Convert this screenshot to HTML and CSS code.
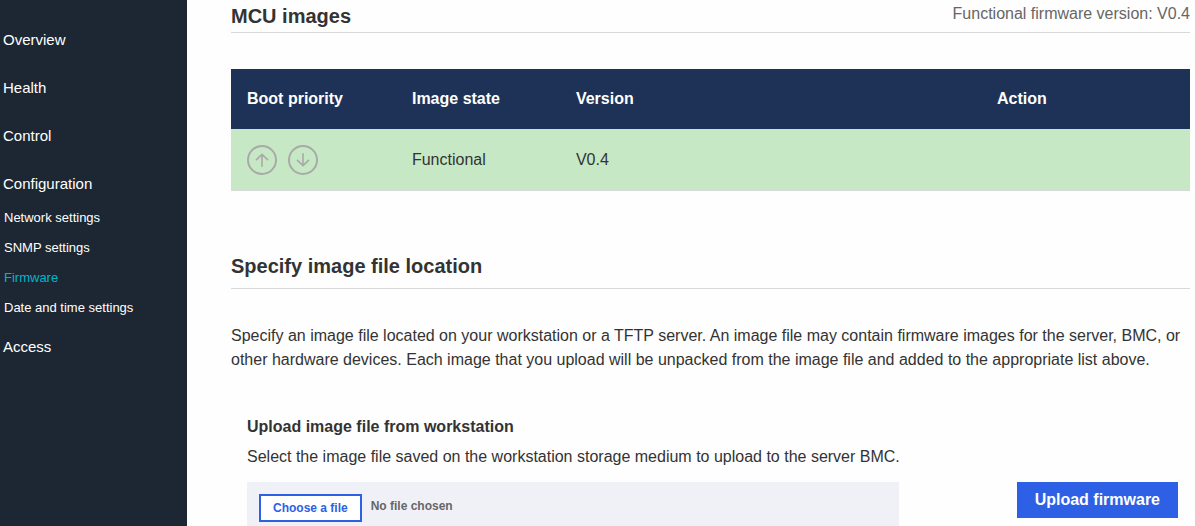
FILE: index.html
```html
<!DOCTYPE html>
<html lang="en">
<head>
<meta charset="utf-8">
<title>Firmware</title>
<link rel="stylesheet" href="styles.css">
</head>
<body>
<div class="app">
  <nav class="sidebar" aria-label="Main">
    <a class="nav-link" href="#overview">Overview</a>
    <a class="nav-link" href="#health">Health</a>
    <a class="nav-link" href="#control">Control</a>
    <a class="nav-link" href="#configuration">Configuration</a>
    <div class="subnav">
      <a class="subnav-link" href="#network">Network settings</a>
      <a class="subnav-link" href="#snmp">SNMP settings</a>
      <a class="subnav-link active" href="#firmware" aria-current="page">Firmware</a>
      <a class="subnav-link" href="#date">Date and time settings</a>
    </div>
    <a class="nav-link" href="#access">Access</a>
  </nav>
  <main class="content">
    <header class="section-head">
      <h2 class="title">MCU images</h2>
      <p class="version">Functional firmware version: V0.4</p>
    </header>
    <table class="images">
      <thead>
        <tr>
          <th class="col-priority">Boot priority</th>
          <th class="col-state">Image state</th>
          <th class="col-version">Version</th>
          <th class="col-action">Action</th>
        </tr>
      </thead>
      <tbody>
        <tr>
          <td>
            <div class="arrows">
              <button class="arrow" type="button" aria-label="Move up">
                <svg width="30" height="30" viewBox="0 0 30 30" fill="none" stroke="currentColor"><circle cx="15" cy="15" r="14" stroke-width="2"/><path d="M15 21.700V9.700M9 15.200L15 9.400L21 15.200" stroke-width="1.600"/></svg>
              </button>
              <button class="arrow" type="button" aria-label="Move down">
                <svg width="30" height="30" viewBox="0 0 30 30" fill="none" stroke="currentColor"><circle cx="15" cy="15" r="14" stroke-width="2"/><path d="M15 8.300V20.300M9 14.800L15 20.600L21 14.800" stroke-width="1.600"/></svg>
              </button>
            </div>
          </td>
          <td>Functional</td>
          <td>V0.4</td>
          <td></td>
        </tr>
      </tbody>
    </table>
    <header class="section-head section-head-tall">
      <h2 class="title">Specify image file location</h2>
    </header>
    <p class="intro">Specify an image file located on your workstation or a TFTP server. An image file may contain firmware images for the server, BMC, or other hardware devices. Each image that you upload will be unpacked from the image file and added to the appropriate list above.</p>
    <section class="upload">
      <h3 class="upload-title">Upload image file from workstation</h3>
      <p class="upload-text">Select the image file saved on the workstation storage medium to upload to the server BMC.</p>
      <div class="upload-row">
        <div class="picker">
          <button class="choose" type="button">Choose a file</button>
          <span class="file-name">No file chosen</span>
        </div>
        <button class="submit" type="button">Upload firmware</button>
      </div>
    </section>
  </main>
</div>
</body>
</html>
```
FILE: styles.css
```css
* { box-sizing: border-box; }
body {
  margin: 0;
  background: #fefefe;
  color: #333;
  font: 16px/24px "Liberation Sans", Arial, sans-serif;
}
h2, h3, p { margin: 0; }
button { font-family: inherit; cursor: pointer; }
.app {
  display: flex;
  height: 100vh;
  overflow: hidden;
}
.sidebar {
  flex: 0 0 187px;
  padding-top: 16px;
  background: #1c2733;
}
.nav-link, .subnav-link {
  display: block;
  color: #fff;
  text-decoration: none;
}
.nav-link {
  padding-left: 3px;
  font-size: 15px;
  line-height: 48px;
}
.subnav { margin-top: -5px; }
.subnav-link {
  padding-left: 4px;
  font-size: 13px;
  line-height: 30px;
}
.subnav-link.active { color: #00b6cb; }
.content {
  flex: 1;
  min-width: 0;
  padding: 1px 5px 0 44px;
}
.section-head {
  display: flex;
  justify-content: space-between;
  border-bottom: 1px solid #d8d8d8;
}
.section-head-tall { padding-bottom: 6px; }
.title {
  font-size: 20px;
  line-height: 31px;
}
.version {
  color: #666;
  line-height: 26px;
}
.images {
  width: 100%;
  margin: 36px 0 60px;
  border-spacing: 0;
  table-layout: fixed;
}
.images th, .images td {
  padding: 0 16px;
  text-align: left;
}
.images th {
  height: 60px;
  background: #1e3257;
  color: #fff;
}
.images td {
  height: 62px;
  background: #c7e8c5;
  border-bottom: 1px solid #d8d8d8;
}
.col-priority { width: 17.2%; }
.col-state { width: 17.1%; }
.col-action { width: 21.8%; }
.arrows { display: flex; gap: 11px; }
.arrow {
  display: flex;
  padding: 0;
  border: 0;
  background: none;
  color: #a9a9a9;
}
.intro { margin-top: 35px; }
.upload { padding: 43px 12px 0 16px; }
.upload-title {
  font-size: 16px;
  line-height: 24px;
}
.upload-text { margin-top: 6px; }
.upload-row {
  display: flex;
  justify-content: space-between;
  align-items: flex-start;
  margin-top: 13px;
}
.picker {
  display: flex;
  align-items: flex-start;
  gap: 9px;
  width: 70%;
  padding: 12px;
  background: #f0f1f6;
}
.choose {
  height: 28px;
  padding: 0 12px;
  border: 2px solid #2d60e5;
  background: #fff;
  color: #2d60e5;
  font-size: 12px;
  font-weight: bold;
}
.file-name {
  color: #666;
  font-size: 12px;
  font-weight: bold;
}
.submit {
  height: 36px;
  padding: 0 18px;
  border: 0;
  background: #2d60e5;
  color: #fff;
  font-size: 16px;
  font-weight: bold;
}
```
